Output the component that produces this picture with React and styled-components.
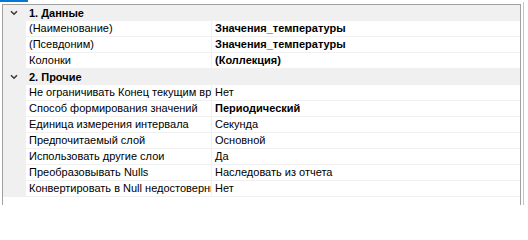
import React from "react";
import styled, { createGlobalStyle } from "styled-components";

const groups = [
  {
    title: "1. Данные",
    rows: [
      { name: "(Наименование)", value: "Значения_температуры", bold: true },
      { name: "(Псевдоним)", value: "Значения_температуры", bold: true },
      { name: "Колонки", value: "(Коллекция)", bold: true },
    ],
  },
  {
    title: "2. Прочие",
    rows: [
      { name: "Не ограничивать Конец текущим временем", value: "Нет" },
      { name: "Способ формирования значений", value: "Периодический", bold: true },
      { name: "Единица измерения интервала", value: "Секунда" },
      { name: "Предпочитаемый слой", value: "Основной" },
      { name: "Использовать другие слои", value: "Да" },
      { name: "Преобразовывать Nulls", value: "Наследовать из отчета" },
      { name: "Конвертировать в Null недостоверные значения", value: "Нет" },
    ],
  },
];

const Chevron = () => (
  <svg width="8" height="6" viewBox="0 0 8 6">
    <path d="M1 1.2 L4 4.2 L7 1.2" fill="none" stroke="#3c3c3c" strokeWidth="1.6" />
  </svg>
);

const App = () => {
  return (
    <Page>
      <GlobalStyle />
      <TabMark />
      <Body>
        <Grid>
          {groups.map((group) => (
            <React.Fragment key={group.title}>
              <CategoryRow>
                <Toggle>
                  <Chevron />
                </Toggle>
                <CategoryTitle>{group.title}</CategoryTitle>
              </CategoryRow>
              {group.rows.map((row) => (
                <PropRow key={row.name}>
                  <Margin />
                  <NameCell>{row.name}</NameCell>
                  <Divider />
                  <ValueCell $bold={row.bold}>{row.value}</ValueCell>
                </PropRow>
              ))}
            </React.Fragment>
          ))}
        </Grid>
        <Edge />
      </Body>
    </Page>
  );
};

const GlobalStyle = createGlobalStyle`
  body {
    margin: 0;
    background: #ffffff;
    font-family: "Liberation Sans", Arial, sans-serif;
  }
`;

const Page = styled.div`
  width: 528px;
  height: 205px;
  overflow: hidden;
  background: #ffffff;
`;

const TabMark = styled.div`
  width: 28px;
  height: 2px;
  background: #0078d7;
`;

const Body = styled.div`
  display: flex;
  height: 203px;
  padding-left: 2px;
`;

const Grid = styled.div`
  margin-top: 2px;
  width: 517px;
  border: 1px solid #a0a0a0;
  border-bottom: none;
  background: #ffffff;
  font-size: 11px;
  color: #000000;
`;

const Edge = styled.div`
  margin-left: 2px;
  width: 1px;
  background: #c4c4c4;
`;

const CategoryRow = styled.div`
  display: flex;
  align-items: center;
  height: 16px;
  background: #f0f0f0;
`;

const Toggle = styled.div`
  display: flex;
  align-items: center;
  width: 23px;
  height: 16px;
  padding-left: 7px;
  box-sizing: border-box;
`;

const CategoryTitle = styled.span`
  padding-left: 3px;
  font-weight: 700;
  line-height: 16px;
`;

const PropRow = styled.div`
  display: grid;
  grid-template-columns: 23px 185px 1px 1fr;
  height: 15px;
  border-bottom: 1px solid #f0f0f0;
`;

const Margin = styled.div`
  background: #f0f0f0;
`;

const NameCell = styled.div`
  padding-left: 3px;
  line-height: 15px;
  white-space: nowrap;
  overflow: hidden;
`;

const Divider = styled.div`
  background: #f0f0f0;
`;

const ValueCell = styled.div`
  padding-left: 3px;
  line-height: 15px;
  white-space: nowrap;
  overflow: hidden;
  font-weight: ${(p) => (p.$bold ? 700 : 400)};
`;

export default App;
